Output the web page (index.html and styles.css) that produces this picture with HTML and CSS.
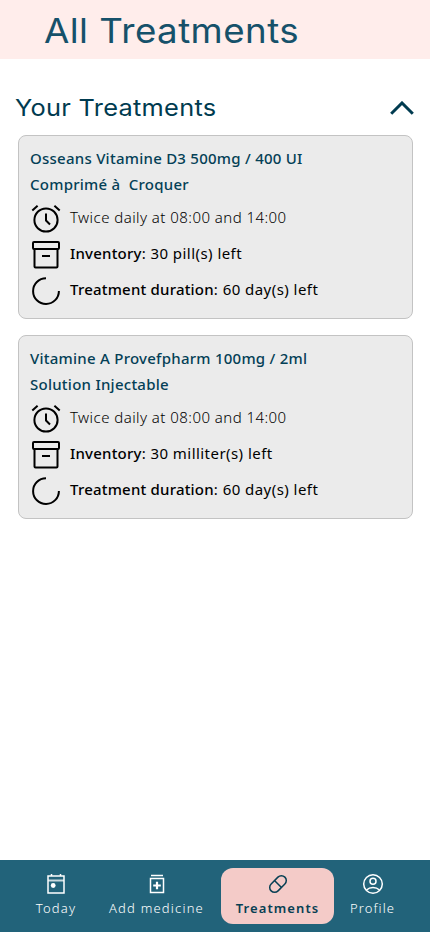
FILE: index.html
```html
<!DOCTYPE html>
<html lang="en">
<head>
<meta charset="utf-8">
<meta name="viewport" content="width=device-width, initial-scale=1">
<title>All Treatments</title>
<link rel="stylesheet" href="styles.css">
</head>
<body>
<svg class="symbols" aria-hidden="true">
  <symbol id="alarm" viewBox="0 0 32 32"><circle cx="16" cy="17" r="11.6"/><path d="M16 10.5v7l4 4M2.3 7.5l5.3-4.7M29.7 7.5l-5.3-4.7"/></symbol>
  <symbol id="box" viewBox="0 0 32 32"><rect x="3" y="3" width="26" height="7" rx="1"/><path d="M4.5 10v17.5a1 1 0 0 0 1 1h21a1 1 0 0 0 1-1V10M12 17h8"/></symbol>
  <symbol id="ring" viewBox="0 0 32 32"><path d="M16 3.2A12.9 12.9 0 1 0 28.9 16"/></symbol>
</svg>
<header class="top"><h1>All Treatments</h1></header>
<main>
  <div class="section-head">
    <h2>Your Treatments</h2>
    <svg class="chevron" viewBox="0 0 24 14"><path d="M1.2 12.7L12 2l10.8 10.7"/></svg>
  </div>
  <article class="card">
    <h3>Osseans Vitamine D3 500mg / 400 UI<br>Comprimé à&nbsp; Croquer</h3>
    <p class="row"><svg><use href="#alarm"/></svg><span class="schedule">Twice daily at 08:00 and 14:00</span></p>
    <p class="row"><svg><use href="#box"/></svg><span class="detail"><b>Inventory</b>: 30 pill(s) left</span></p>
    <p class="row"><svg><use href="#ring"/></svg><span class="detail"><b>Treatment duration</b>: 60 day(s) left</span></p>
  </article>
  <article class="card">
    <h3>Vitamine A Provefpharm 100mg / 2ml<br>Solution Injectable</h3>
    <p class="row"><svg><use href="#alarm"/></svg><span class="schedule">Twice daily at 08:00 and 14:00</span></p>
    <p class="row"><svg><use href="#box"/></svg><span class="detail"><b>Inventory</b>: 30 milliter(s) left</span></p>
    <p class="row"><svg><use href="#ring"/></svg><span class="detail"><b>Treatment duration</b>: 60 day(s) left</span></p>
  </article>
</main>
<nav>
  <a class="tab today"><svg viewBox="0 0 24 24"><path d="M4 4h16v17H4zM7.5 2v2.5M16.5 2v2.5"/><path class="band" d="M4 8.5h16"/><circle class="solid" cx="9.2" cy="13.5" r="2.4"/></svg><span>Today</span></a>
  <a class="tab add"><svg viewBox="0 0 24 24"><path d="M6 3.5h12M5.5 6.5h13v14h-13z"/><path class="plus" d="M12 9.7v7.6M8.2 13.5h7.6"/></svg><span>Add medicine</span></a>
  <a class="tab active"><svg viewBox="0 0 24 24"><rect x="2.3" y="7.1" width="19.4" height="9.8" rx="4.9" transform="rotate(-45 12 12)"/><path d="M8.5 8.5l7 7"/></svg><span>Treatments</span></a>
  <a class="tab profile"><svg viewBox="0 0 24 24"><circle cx="12" cy="12" r="9.3"/><circle cx="12" cy="9.2" r="3"/><path d="M5.5 18C9 14.7 15 14.7 18.5 18"/></svg><span>Profile</span></a>
</nav>
</body>
</html>
```
FILE: styles.css
```css
* { box-sizing: border-box; }
body { margin: 0; height: 932px; display: flex; flex-direction: column; background: #fff; font-family: "Noto Sans", sans-serif; overflow: hidden; }
h1, h2, h3, p { margin: 0; }
.symbols { display: none; }
svg { fill: none; stroke: currentColor; flex: none; }
.top { height: 59px; padding-left: 44px; background: #ffedeb; color: #16516a; }
h1 { width: max-content; font: 440 34px/62px Inter, sans-serif; letter-spacing: 0.4px; white-space: nowrap; transform: scaleX(1.08); transform-origin: left; }
main { flex: 1; padding: 33px 17px 0 18px; }
.section-head { display: flex; align-items: center; height: 32px; margin: 0 -1px 11px -3px; color: #003b50; }
h2 { font: 440 23.5px/34px Inter, sans-serif; letter-spacing: 0.25px; white-space: nowrap; transform: scaleX(1.08); transform-origin: left; }
.chevron { width: 24px; height: 14px; margin-left: auto; stroke-width: 3; }
.card { height: 184px; margin-bottom: 16px; padding: 9px 11px; background: #ebebeb; border: 1px solid #c3c3c3; border-radius: 8px; }
h3 { font-size: 15px; font-weight: 500; line-height: 26px; letter-spacing: 0.25px; color: #044056; margin-bottom: 2px; white-space: nowrap; }
.row { display: flex; align-items: center; height: 36px; font-size: 15px; line-height: 24px; color: #000; white-space: nowrap; }
.row svg { width: 32px; height: 32px; margin-right: 8px; stroke-width: 2; stroke-linejoin: round; position: relative; top: 2px; }
.row b { font-weight: 500; letter-spacing: 0.2px; }
.schedule { font-weight: 300; letter-spacing: 0.45px; }
.detail { letter-spacing: 0.45px; }
nav { height: 72px; padding: 8px 16px 8px 15px; display: flex; background: #22637a; color: #fff; }
.tab { display: flex; flex-direction: column; align-items: center; padding-top: 4px; border-radius: 12px; font-size: 13px; line-height: 18px; font-weight: 300; letter-spacing: 1.2px; white-space: nowrap; }
.tab svg { width: 24px; height: 24px; margin-bottom: 3px; stroke-width: 1.5; }
.tab .solid { fill: currentColor; stroke: none; }
.tab .band { stroke-width: 2; opacity: .75; }
.tab .plus { stroke-width: 2.2; }
.today { width: 82px; }
.add { width: 119px; margin-right: 5px; }
.active { width: 113px; background: #f4cbc8; color: #073f53; font-weight: 600; letter-spacing: 1.1px; }
.profile { width: 77px; letter-spacing: 1.1px; }
```
